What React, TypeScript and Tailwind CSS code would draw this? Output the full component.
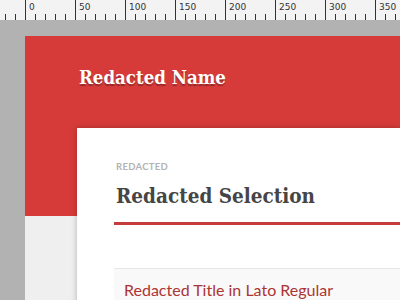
import type { FC } from "react";

const Ruler: FC = () => {
	const minors = [];
	for (let x = 5; x < 400; x += 10) {
		if ((x - 25) % 50 !== 0) minors.push(x);
	}
	const majors = [];
	for (let x = 25; x < 400; x += 50) majors.push(x);

	return (
		<svg width="400" height="20" className="block flex-none bg-[#f3f3f3]">
			{minors.map((x) => (
				<line key={x} x1={x + 0.5} x2={x + 0.5} y1={14} y2={20} stroke="#333" strokeWidth={1} />
			))}
			{majors.map((x) => (
				<g key={x}>
					<line x1={x + 0.5} x2={x + 0.5} y1={0} y2={20} stroke="#333" strokeWidth={1} />
					<text
						x={x + 4}
						y={10}
						fontSize={9}
						fill="#333"
						fontFamily="'DejaVu Sans', sans-serif"
					>
						{x - 25}
					</text>
				</g>
			))}
		</svg>
	);
};

export default function App() {
	return (
		<div className="flex h-[300px] w-[400px] flex-col overflow-hidden bg-[#b2b2b2]">
			<Ruler />
			<div className="flex min-h-0 flex-1 overflow-hidden">
				<div className="w-[25px] flex-none" />
				<div className="flex flex-1 flex-col pt-[16px]">
					<div className="flex-1 bg-[#efefef]">
						<header className="h-[180px] bg-[#d63b39] pl-[54px] pt-[30px]">
							<h1 className="font-['DejaVu_Serif_Condensed','DejaVu_Serif',serif] text-[18.5px] leading-[24px] font-bold text-white [text-shadow:0_2px_1px_rgba(0,0,0,0.3)]">
								Redacted Name
							</h1>
						</header>
						<section className="-mt-[88px] ml-[52px] h-[200px] bg-white pl-[37px] pt-[33px] shadow-[0_0_6px_rgba(0,0,0,0.25)]">
							<p className="pl-[2px] font-['Lato',sans-serif] text-[9.5px] leading-[12px] font-bold tracking-[0.3px] text-[#b3b3b3]">
								REDACTED
							</p>
							<h2 className="mt-[10px] pl-[2px] font-['DejaVu_Serif_Condensed','DejaVu_Serif',serif] text-[20.5px] leading-[26px] font-bold text-[#454545]">
								Redacted Selection
							</h2>
							<div className="mt-[13px] h-[3px] bg-[#c63b3b]" />
							<div className="mt-[43px] border-t border-[#e6e6e6] bg-[#f9f9f9] pl-[10px] pt-[11px]">
								<p className="font-['Lato',sans-serif] text-[16px] leading-[20px] text-[#ad3434]">
									Redacted Title in Lato Regular
								</p>
							</div>
						</section>
					</div>
				</div>
			</div>
		</div>
	);
}
